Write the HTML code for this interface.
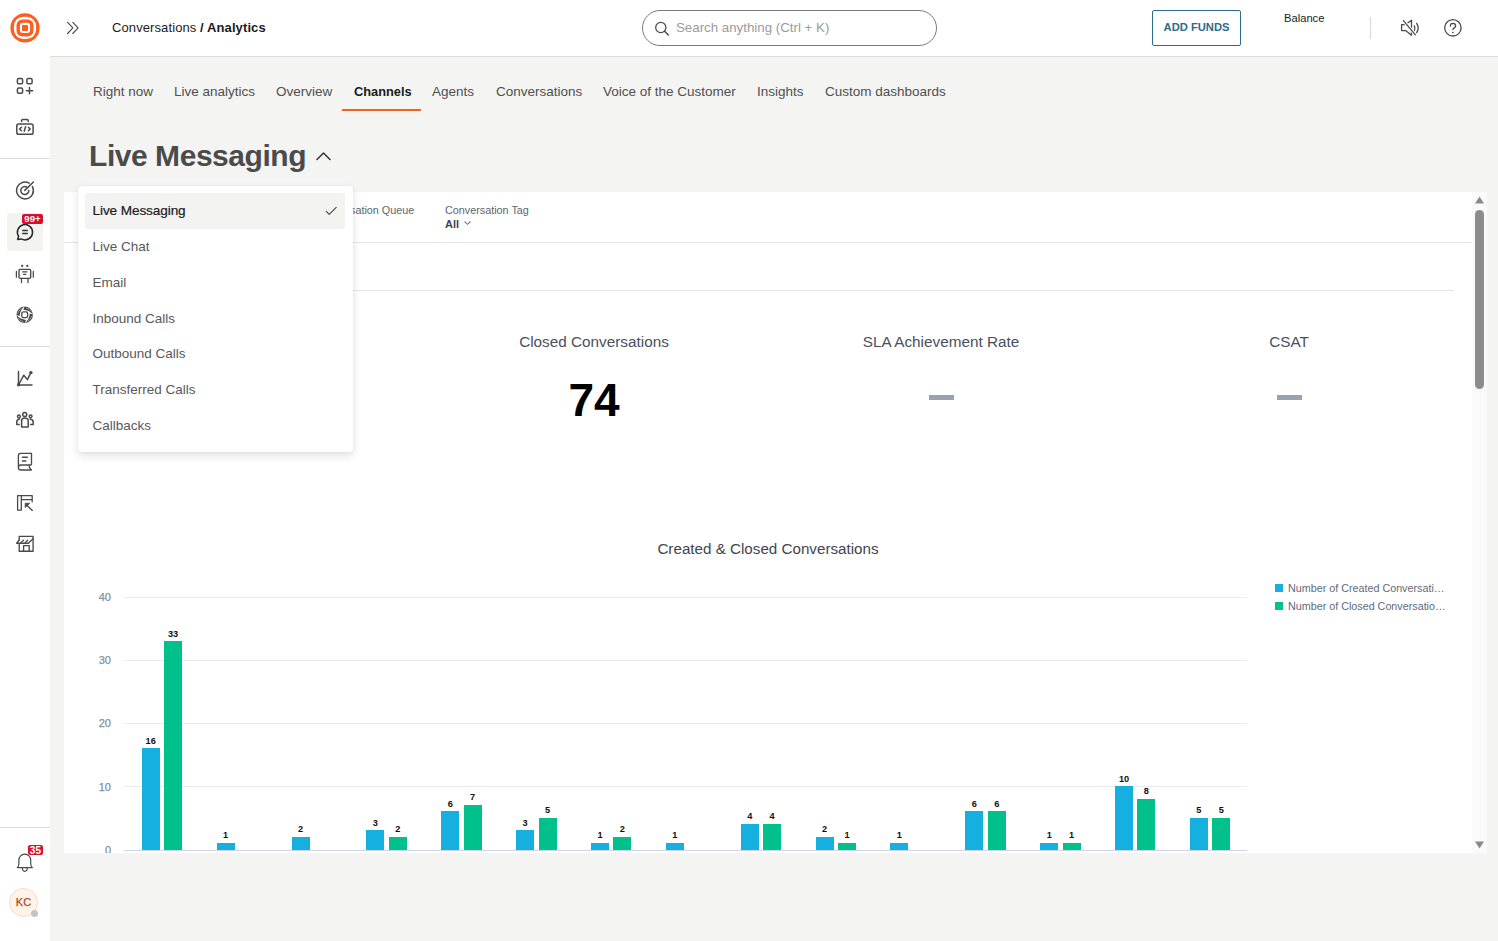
<!DOCTYPE html>
<html><head><meta charset="utf-8">
<style>
*{box-sizing:border-box;margin:0;padding:0}
html,body{width:1498px;height:941px;overflow:hidden;background:#f4f4f3;font-family:"Liberation Sans",sans-serif;position:relative}
.abs{position:absolute}
#side{left:0;top:0;width:50px;height:941px;background:#fff}
#head{left:50px;top:0;width:1448px;height:57px;background:#fff;border-bottom:1px solid #dcdcdc}
.hdiv{position:absolute;left:0;width:50px;height:1px;background:#dcdcdc}
.ic{position:absolute}
.ic svg{display:block}
.tab{position:absolute;top:84px;font-size:13.5px;color:#4f4f4f;white-space:nowrap}
.dd{position:absolute;left:92.5px;font-size:13.5px;color:#595959;white-space:nowrap}
#card{left:64px;top:192px;width:1423px;height:661px;background:#fff}
.hl{position:absolute;height:1px;background:#e1e6ec}
.kt{position:absolute;font-size:15.3px;color:#48515c;white-space:nowrap;text-align:center}
.dash{position:absolute;width:25px;height:5px;background:#97a3b0}
.yl{position:absolute;font-size:11px;color:#7f8d9d;-webkit-text-stroke:0.25px #8795a5;text-align:right;width:30px;left:81px}
.grid{position:absolute;left:124px;width:1123px;height:1px;background:#e9ecef}
.bar{position:absolute;width:18px}
.b{background:#15b0e0}
.g{background:#00c08c}
.bl{position:absolute;font-size:9.2px;font-weight:bold;color:#111;width:30px;text-align:center}
</style></head>
<body>
<!-- sidebar -->
<div id="side" class="abs">
  <!-- logo -->
  <svg class="ic" style="left:0;top:0" width="50" height="56" viewBox="0 0 50 56">
    <circle cx="25" cy="27.9" r="14.6" fill="#fc5f1d"/>
    <rect x="13.9" y="16.8" width="22.2" height="22.2" rx="9.5" fill="#fff"/>
    <rect x="16.5" y="19.4" width="17" height="17" rx="6" fill="#fc5f1d"/>
    <rect x="19.9" y="22.8" width="10.2" height="10.2" rx="3" fill="#fff"/>
    <rect x="22" y="24.9" width="6" height="6" rx="0.9" fill="#fc5f1d"/>
  </svg>

  <!-- grid -->
  <svg class="ic" style="left:0;top:70px" width="50" height="32" viewBox="0 70 50 32">
    <rect x="17.4" y="78.6" width="5.2" height="5.2" rx="1.3" fill="none" stroke="#4a4a4a" stroke-width="1.5" stroke-linecap="round" stroke-linejoin="round"/>
    <rect x="26.9" y="78.6" width="5.2" height="5.2" rx="1.3" fill="none" stroke="#4a4a4a" stroke-width="1.5" stroke-linecap="round" stroke-linejoin="round"/>
    <rect x="17.4" y="88.1" width="5.2" height="5.2" rx="1.3" fill="none" stroke="#4a4a4a" stroke-width="1.5" stroke-linecap="round" stroke-linejoin="round"/>
    <path d="M29.5 87.6 V93.8 M26.4 90.7 H32.6" fill="none" stroke="#4a4a4a" stroke-width="1.5" stroke-linecap="round" stroke-linejoin="round"/>
  </svg>
  <!-- code case -->
  <svg class="ic" style="left:0;top:112px" width="50" height="30" viewBox="0 112 50 30">
    <rect x="16.8" y="124" width="16.3" height="10.2" rx="1.8" fill="none" stroke="#4a4a4a" stroke-width="1.5" stroke-linecap="round" stroke-linejoin="round"/>
    <path d="M21.6 121.4 V120.6 Q21.6 119.4 22.8 119.4 H27 Q28.2 119.4 28.2 120.6 V121.4" fill="none" stroke="#4a4a4a" stroke-width="1.5" stroke-linecap="round" stroke-linejoin="round"/>
    <path d="M21.4 127.2 L19.6 129 L21.4 130.8 M28.4 127.2 L30.2 129 L28.4 130.8 M25.6 126.8 L24.2 131.2" fill="none" stroke="#4a4a4a" stroke-width="1.5" stroke-linecap="round" stroke-linejoin="round" stroke-width="1.4"/>
  </svg>
  <!-- target -->
  <svg class="ic" style="left:0;top:176px" width="50" height="30" viewBox="0 176 50 30">
    <path d="M32.4 186.5 A8.4 8.4 0 1 1 29.2 183.2" fill="none" stroke="#4a4a4a" stroke-width="1.5" stroke-linecap="round" stroke-linejoin="round"/>
    <path d="M28.8 190.6 A4 4 0 1 1 26.6 187" fill="none" stroke="#4a4a4a" stroke-width="1.5" stroke-linecap="round" stroke-linejoin="round"/>
    <path d="M24.8 190.4 L33.4 182" fill="none" stroke="#4a4a4a" stroke-width="1.5" stroke-linecap="round" stroke-linejoin="round"/>
  </svg>
  <!-- chat active -->
  <div class="abs" style="left:7px;top:213px;width:36px;height:38px;background:#f3f3f2;border-radius:3px"></div>
  <svg class="ic" style="left:0;top:220px" width="50" height="25" viewBox="0 220 50 25">
    <path d="M18.6 236.4 A7.6 7.6 0 1 1 21.3 238.9 L17.6 239.5 Z" fill="none" stroke="#2a2a2a" stroke-width="1.5" stroke-linejoin="round"/>
    <path d="M22.2 230.6 H27.8 M22.2 233.4 H27.8" stroke="#333" stroke-width="1.5"/>
  </svg>
  <div class="abs" style="left:22px;top:214px;width:21px;height:10px;background:#d5102c;border-radius:2px;color:#fff;font-size:9.6px;font-weight:bold;line-height:10.5px;text-align:center;letter-spacing:0.1px">99+</div>
  <!-- robot -->
  <svg class="ic" style="left:0;top:260px" width="50" height="28" viewBox="0 260 50 28">
    <rect x="19" y="269.3" width="11.7" height="9" rx="1.1" fill="none" stroke="#4a4a4a" stroke-linecap="round" stroke-linejoin="round" stroke-width="1.35"/>
    <circle cx="22.1" cy="265.9" r="1.15" fill="#4a4a4a"/>
    <circle cx="27.3" cy="265.9" r="1.15" fill="#4a4a4a"/>
    <path d="M16.4 271.4 V277.2 M33.3 271.4 V277.2 M21.5 279 V282.6 M28 279 V282.6" fill="none" stroke="#4a4a4a" stroke-linecap="round" stroke-linejoin="round" stroke-width="1.25"/>
    <path d="M22.6 271.8 H27 M23.6 274.4 H25.8" fill="none" stroke="#4a4a4a" stroke-linecap="round" stroke-linejoin="round" stroke-width="1.2"/>
  </svg>
  <!-- ai swirl -->
  <svg class="ic" style="left:0;top:302px" width="50" height="26" viewBox="0 302 50 26">
    <rect x="21.8" y="311.8" width="5.8" height="5.8" rx="1.7" fill="none" stroke="#4a4a4a" stroke-width="1.35"/>
    <path d="M24.41 306.60 A8.2 8.2 0 0 1 32.88 314.23 Q28.92 310.12 23.42 309.66 Z M32.90 314.51 A8.2 8.2 0 0 1 25.27 322.98 Q29.38 319.02 29.84 313.52 Z M24.99 323.00 A8.2 8.2 0 0 1 16.52 315.37 Q20.48 319.48 25.98 319.94 Z M16.50 315.09 A8.2 8.2 0 0 1 24.13 306.62 Q20.02 310.58 19.56 316.08 Z" fill="#4a4a4a"/><path d="M25.95 307.71 Q29.38 308.81 31.32 311.71 M31.79 316.05 Q30.69 319.48 27.79 321.42 M23.45 321.89 Q20.02 320.79 18.08 317.89 M17.61 313.55 Q18.71 310.12 21.61 308.18" fill="none" stroke="#fff" stroke-width="0.55" opacity="0.8"/>
  </svg>
  <!-- chart -->
  <svg class="ic" style="left:0;top:366px" width="50" height="26" viewBox="0 366 50 26">
    <path d="M18.5 371.6 V385 H32" fill="none" stroke="#4a4a4a" stroke-width="1.5" stroke-linecap="round" stroke-linejoin="round"/>
    <path d="M18.5 385 L23.8 375.2 L27.4 379.6 L30.8 372.8" fill="none" stroke="#4a4a4a" stroke-width="1.5" stroke-linecap="round" stroke-linejoin="round"/>
    <circle cx="30.9" cy="372.6" r="1.7" fill="#4a4a4a"/>
    <circle cx="18.6" cy="384.8" r="1.7" fill="#4a4a4a"/>
  </svg>
  <!-- people -->
  <svg class="ic" style="left:0;top:408px" width="50" height="24" viewBox="0 408 50 24">
    <circle cx="24.7" cy="414.6" r="2" fill="none" stroke="#4a4a4a" stroke-width="1.5" stroke-linecap="round" stroke-linejoin="round" stroke-width="1.3"/>
    <path d="M21.6 427 V421 Q21.6 418 24.8 418 Q28.2 418 28.2 421 V427 Z" fill="none" stroke="#4a4a4a" stroke-width="1.5" stroke-linecap="round" stroke-linejoin="round" stroke-width="1.4"/>
    <circle cx="18.9" cy="416.5" r="1.4" fill="none" stroke="#4a4a4a" stroke-width="1.5" stroke-linecap="round" stroke-linejoin="round" stroke-width="1.2"/>
    <circle cx="30.6" cy="416.3" r="1.4" fill="none" stroke="#4a4a4a" stroke-width="1.5" stroke-linecap="round" stroke-linejoin="round" stroke-width="1.2"/>
    <path d="M19.6 419 Q16.8 419.4 16.8 422 V424.4 H19.2 M30 419 Q33.2 419.4 33.2 422 V424.4 H30.6" fill="none" stroke="#4a4a4a" stroke-width="1.5" stroke-linecap="round" stroke-linejoin="round" stroke-width="1.3"/>
  </svg>
  <!-- book -->
  <svg class="ic" style="left:0;top:448px" width="50" height="28" viewBox="0 448 50 28">
    <path d="M18.4 467 V455.6 Q18.4 453.4 20.6 453.4 H31.5 V464.2 Q31.5 465 30.7 465 H21 Q18.4 465 18.4 467.4 Q18.4 470 21 470 H31.4 L29.4 467.6 V465" fill="none" stroke="#4a4a4a" stroke-linecap="round" stroke-linejoin="round" stroke-width="1.35"/>
    <path d="M22.4 457.3 H27.4 M22.4 461 H25.8" fill="none" stroke="#4a4a4a" stroke-linecap="round" stroke-linejoin="round" stroke-width="1.4"/>
  </svg>
  <!-- layout -->
  <svg class="ic" style="left:0;top:490px" width="50" height="26" viewBox="0 490 50 26">
    <path d="M17.6 495.7 H32.2 V501.8 M17.6 495.7 V510.2 H21.3 V495.7 M21.3 499.6 H32.2" fill="none" stroke="#4a4a4a" stroke-linecap="round" stroke-linejoin="round" stroke-width="1.3"/>
    <path d="M25.2 503.3 H29.8 L25.2 507.6 Z" fill="#4a4a4a" stroke="#4a4a4a" stroke-width="0.8" stroke-linejoin="round"/>
    <path d="M26.6 505 L32.3 510.4" fill="none" stroke="#4a4a4a" stroke-linecap="round" stroke-linejoin="round" stroke-width="1.35"/>
  </svg>
  <!-- store -->
  <svg class="ic" style="left:0;top:530px" width="50" height="26" viewBox="0 530 50 26">
    <path d="M19.2 540 V536.4 H33.1 V551.2 H19.2 V543.3" fill="none" stroke="#4a4a4a" stroke-linecap="round" stroke-linejoin="round" stroke-width="1.35"/>
    <path d="M19.2 540 L16.6 543.2 H28.4 L33 538.8" fill="none" stroke="#4a4a4a" stroke-linecap="round" stroke-linejoin="round" stroke-width="1.35"/>
    <path d="M21 542.6 L23.6 540.2 M25.2 542.6 L27.7 540.2" fill="none" stroke="#4a4a4a" stroke-linecap="round" stroke-linejoin="round" stroke-width="1.3"/>
    <path d="M23.6 551.2 V545.6 H29.2 V551.2" fill="none" stroke="#4a4a4a" stroke-linecap="round" stroke-linejoin="round" stroke-width="1.35"/>
  </svg>
  <!-- bell -->
  <svg class="ic" style="left:0;top:844px" width="50" height="32" viewBox="0 844 50 32">
    <path d="M17.3 867.6 Q18.9 866.6 18.9 863.6 V860 A5.9 5.9 0 0 1 30.7 860 V863.6 Q30.7 866.6 32.3 867.6 Z" fill="none" stroke="#4a4a4a" stroke-linecap="round" stroke-linejoin="round" stroke-width="1.2"/>
    <path d="M22.3 867.8 Q22.3 871.3 24.8 871.3 Q27.3 871.3 27.3 867.8" fill="none" stroke="#4a4a4a" stroke-linecap="round" stroke-linejoin="round" stroke-width="1.2"/>
  </svg>
  <div class="abs" style="left:28px;top:845px;width:15px;height:10px;background:#d5102c;border-radius:2px;color:#fff;font-size:10px;font-weight:bold;line-height:11px;text-align:center;letter-spacing:0.2px;white-space:nowrap">35</div>
  <!-- avatar -->
  <div class="abs" style="left:9px;top:888px;width:29px;height:29px;border-radius:50%;background:#fff3ea;border:1px solid #fbd9c0;color:#a8481c;font-size:11px;font-weight:normal;line-height:26px;text-align:center;-webkit-text-stroke:0.25px #a8481c">KC</div>
  <div class="abs" style="left:31px;top:910px;width:7px;height:7px;border-radius:50%;background:#c4c4c4"></div>
  <div class="hdiv" style="top:158px"></div>
  <div class="hdiv" style="top:346px"></div>
  <div class="hdiv" style="top:827px"></div>
</div>

<div id="head" class="abs">
</div>
<!-- double chevron -->
<svg class="ic" style="left:64.8px;top:20px" width="16" height="16" viewBox="0 0 16 16">
  <path d="M2.6 2.3 L7.9 7.9 L2.6 13.5 M7.8 2.3 L13.1 7.9 L7.8 13.5" fill="none" stroke="#4a4a4a" stroke-width="1.15" stroke-linecap="round" stroke-linejoin="round"/>
</svg>
<div class="abs" style="left:112px;top:20px;font-size:13px;color:#1c1c1c;white-space:nowrap;letter-spacing:0.1px">Conversations <b>/ Analytics</b></div>
<!-- search -->
<div class="abs" style="left:642px;top:10px;width:295px;height:36px;border:1px solid #7a7a7a;border-radius:18px;background:#fff"></div>
<svg class="ic" style="left:654px;top:21px" width="16" height="15" viewBox="0 0 16 15">
  <circle cx="6.8" cy="6.5" r="5.1" fill="none" stroke="#4a4a4a" stroke-width="1.25"/>
  <path d="M10.6 10.3 L14.3 14" stroke="#444" stroke-width="1.4" stroke-linecap="round"/>
</svg>
<div class="abs" style="left:676px;top:19.8px;font-size:13.3px;color:#9b9b9b;white-space:nowrap">Search anything (Ctrl + K)</div>
<!-- add funds -->
<div class="abs" style="left:1152px;top:10px;width:89px;height:36px;border:1.5px solid #2c6b8c;border-radius:2px;background:#fff"></div>
<div class="abs" style="left:1152px;top:21px;width:89px;text-align:center;font-size:11.2px;font-weight:bold;color:#2c6b8c;white-space:nowrap">ADD FUNDS</div>
<div class="abs" style="left:1284px;top:12px;font-size:11.2px;color:#222;white-space:nowrap">Balance</div>
<div class="abs" style="left:1370px;top:17px;width:1px;height:22px;background:#d6d6d6"></div>
<!-- mute icon -->
<svg class="ic" style="left:1395px;top:12px" width="30" height="30" viewBox="1395 12 30 30">
  <path d="M1405.6 24.6 H1401.6 V30.6 H1405.6 L1411.5 35.2 V20.2 Z" fill="none" stroke="#4a4a4a" stroke-linecap="round" stroke-linejoin="round" stroke-width="1.3"/>
  <path d="M1414.3 25.8 Q1415.6 28.2 1414.3 30.8 M1416.6 23.4 Q1419.8 28.2 1416.6 32.6" fill="none" stroke="#4a4a4a" stroke-linecap="round" stroke-linejoin="round" stroke-width="1.3"/>
  <path d="M1403.4 20.6 L1415.4 34.8" stroke="#fff" stroke-width="3.2" stroke-linecap="round"/>
  <path d="M1403.4 20.6 L1415.4 34.8" fill="none" stroke="#4a4a4a" stroke-linecap="round" stroke-linejoin="round" stroke-width="1.3"/>
</svg>
<!-- help -->
<svg class="ic" style="left:1440px;top:15px" width="26" height="26" viewBox="1440 15 26 26">
  <circle cx="1452.9" cy="27.8" r="8.2" fill="none" stroke="#4a4a4a" stroke-linecap="round" stroke-linejoin="round" stroke-width="1.3"/>
  <path d="M1450.4 26 Q1450.2 23.4 1452.9 23.3 Q1455.6 23.4 1455.6 25.7 Q1455.6 27.2 1453.9 28.1 Q1452.9 28.7 1452.9 29.6" fill="none" stroke="#4a4a4a" stroke-linecap="round" stroke-linejoin="round" stroke-width="1.3"/>
  <circle cx="1452.9" cy="32.5" r="0.85" fill="#4a4a4a"/>
</svg>

<div class="tab" style="left:93px">Right now</div>
<div class="tab" style="left:174px">Live analytics</div>
<div class="tab" style="left:276px">Overview</div>
<div class="tab" style="left:354px;color:#1a1a1a;font-weight:bold;font-size:12.8px">Channels</div>
<div class="tab" style="left:432px">Agents</div>
<div class="tab" style="left:496px">Conversations</div>
<div class="tab" style="left:603px">Voice of the Customer</div>
<div class="tab" style="left:757px">Insights</div>
<div class="tab" style="left:825px">Custom dashboards</div>
<div class="abs" style="left:342px;top:109px;width:79px;height:2px;background:#f26322"></div>
<div class="abs" style="left:89px;top:138.5px;font-size:30px;font-weight:bold;color:#4b4b4b;white-space:nowrap;letter-spacing:-0.45px">Live Messaging</div>
<svg class="ic" style="left:314px;top:149px" width="20" height="14" viewBox="0 0 20 14"><path d="M3 10.5 L9.5 4 L16 10.5" fill="none" stroke="#3a3a3a" stroke-width="1.6" stroke-linecap="round" stroke-linejoin="round"/></svg>
<div id="card" class="abs"></div>
<div class="hl" style="left:64px;top:242px;width:1408px"></div>
<div class="hl" style="left:82px;top:290px;width:1372px"></div>
<div class="abs" style="left:315.2px;top:204px;font-size:10.8px;color:#5b6570;white-space:nowrap">Conversation Queue</div>
<div class="abs" style="left:445px;top:204px;font-size:10.8px;color:#5b6570;white-space:nowrap">Conversation Tag</div>
<div class="abs" style="left:445px;top:218px;font-size:11px;font-weight:bold;color:#3d4650;white-space:nowrap">All</div>
<svg class="ic" style="left:463px;top:220px" width="9" height="6" viewBox="0 0 9 6"><path d="M1.5 1.5 L4.5 4.3 L7.5 1.5" fill="none" stroke="#77818c" stroke-width="1.1"/></svg>
<div class="abs" style="left:1472px;top:192px;width:15px;height:661px;background:#fafafa"></div>
<svg class="ic" style="left:1472px;top:192px" width="15" height="15" viewBox="0 0 15 15"><path d="M3 11.5 L7.5 4.5 L12 11.5 Z" fill="#8a8a8a"/></svg>
<svg class="ic" style="left:1472px;top:838px" width="15" height="15" viewBox="0 0 15 15"><path d="M3 3.5 L7.5 10.5 L12 3.5 Z" fill="#8a8a8a"/></svg>
<div class="abs" style="left:1475px;top:210px;width:9px;height:179px;background:#8c8c8c;border-radius:4.5px"></div>
<div class="kt" style="left:96.5px;top:333px;width:300px">Created Conversations</div>
<div class="kt" style="left:444px;top:333px;width:300px">Closed Conversations</div>
<div class="kt" style="left:791px;top:333px;width:300px">SLA Achievement Rate</div>
<div class="kt" style="left:1139px;top:333px;width:300px">CSAT</div>
<div class="abs" style="left:444px;top:373px;width:300px;text-align:center;font-size:46px;font-weight:bold;color:#000">74</div>
<div class="dash" style="left:929px;top:395px"></div>
<div class="dash" style="left:1277px;top:395px"></div>
<div class="abs" style="left:568px;top:540px;width:400px;text-align:center;font-size:15.2px;color:#3f4650;white-space:nowrap">Created &amp; Closed Conversations</div>
<div class="grid" style="top:597px"></div>
<div class="grid" style="top:660px"></div>
<div class="grid" style="top:723px"></div>
<div class="grid" style="top:786px"></div>
<div class="grid" style="top:850px;background:#ccd6eb"></div>
<div class="yl" style="top:591px">40</div>
<div class="yl" style="top:654px">30</div>
<div class="yl" style="top:717px">20</div>
<div class="yl" style="top:781px">10</div>
<div class="yl" style="top:844px;height:9px;overflow:hidden">0</div>
<div class="bar b" style="left:141.7px;top:748.3px;height:101.7px"></div>
<div class="bl" style="left:135.7px;top:735.7px">16</div>
<div class="bar g" style="left:164.1px;top:641.3px;height:208.7px"></div>
<div class="bl" style="left:158.1px;top:628.7px">33</div>
<div class="bar b" style="left:216.6px;top:842.8px;height:7.2px"></div>
<div class="bl" style="left:210.6px;top:830.2px">1</div>
<div class="bar b" style="left:291.5px;top:836.5px;height:13.5px"></div>
<div class="bl" style="left:285.5px;top:823.9px">2</div>
<div class="bar b" style="left:366.3px;top:830.2px;height:19.8px"></div>
<div class="bl" style="left:360.3px;top:817.6px">3</div>
<div class="bar g" style="left:388.7px;top:836.5px;height:13.5px"></div>
<div class="bl" style="left:382.7px;top:823.9px">2</div>
<div class="bar b" style="left:441.2px;top:811.3px;height:38.7px"></div>
<div class="bl" style="left:435.2px;top:798.7px">6</div>
<div class="bar g" style="left:463.6px;top:805.0px;height:45.0px"></div>
<div class="bl" style="left:457.6px;top:792.4px">7</div>
<div class="bar b" style="left:516.1px;top:830.2px;height:19.8px"></div>
<div class="bl" style="left:510.1px;top:817.6px">3</div>
<div class="bar g" style="left:538.5px;top:817.6px;height:32.4px"></div>
<div class="bl" style="left:532.5px;top:805.0px">5</div>
<div class="bar b" style="left:591.0px;top:842.8px;height:7.2px"></div>
<div class="bl" style="left:585.0px;top:830.2px">1</div>
<div class="bar g" style="left:613.4px;top:836.5px;height:13.5px"></div>
<div class="bl" style="left:607.4px;top:823.9px">2</div>
<div class="bar b" style="left:665.8px;top:842.8px;height:7.2px"></div>
<div class="bl" style="left:659.8px;top:830.2px">1</div>
<div class="bar b" style="left:740.7px;top:823.9px;height:26.1px"></div>
<div class="bl" style="left:734.7px;top:811.3px">4</div>
<div class="bar g" style="left:763.1px;top:823.9px;height:26.1px"></div>
<div class="bl" style="left:757.1px;top:811.3px">4</div>
<div class="bar b" style="left:815.6px;top:836.5px;height:13.5px"></div>
<div class="bl" style="left:809.6px;top:823.9px">2</div>
<div class="bar g" style="left:838.0px;top:842.8px;height:7.2px"></div>
<div class="bl" style="left:832.0px;top:830.2px">1</div>
<div class="bar b" style="left:890.4px;top:842.8px;height:7.2px"></div>
<div class="bl" style="left:884.4px;top:830.2px">1</div>
<div class="bar b" style="left:965.3px;top:811.3px;height:38.7px"></div>
<div class="bl" style="left:959.3px;top:798.7px">6</div>
<div class="bar g" style="left:987.7px;top:811.3px;height:38.7px"></div>
<div class="bl" style="left:981.7px;top:798.7px">6</div>
<div class="bar b" style="left:1040.2px;top:842.8px;height:7.2px"></div>
<div class="bl" style="left:1034.2px;top:830.2px">1</div>
<div class="bar g" style="left:1062.6px;top:842.8px;height:7.2px"></div>
<div class="bl" style="left:1056.6px;top:830.2px">1</div>
<div class="bar b" style="left:1115.0px;top:786.1px;height:63.9px"></div>
<div class="bl" style="left:1109.0px;top:773.5px">10</div>
<div class="bar g" style="left:1137.4px;top:798.7px;height:51.3px"></div>
<div class="bl" style="left:1131.4px;top:786.1px">8</div>
<div class="bar b" style="left:1189.9px;top:817.6px;height:32.4px"></div>
<div class="bl" style="left:1183.9px;top:805.0px">5</div>
<div class="bar g" style="left:1212.3px;top:817.6px;height:32.4px"></div>
<div class="bl" style="left:1206.3px;top:805.0px">5</div>
<div class="abs" style="left:1275px;top:584px;width:8px;height:8px;background:#15b0e0"></div>
<div class="abs" style="left:1275px;top:602px;width:8px;height:8px;background:#00c08c"></div>
<div class="abs" style="left:1288px;top:582px;font-size:10.75px;color:#5f6b78;white-space:nowrap">Number of Created Conversati…</div>
<div class="abs" style="left:1288px;top:600px;font-size:10.75px;color:#5f6b78;white-space:nowrap">Number of Closed Conversatio…</div>

<div class="abs" style="left:78px;top:186px;width:275px;height:266px;background:#fff;border-radius:4px;box-shadow:0 4px 10px rgba(0,0,0,0.12),0 0 2px rgba(0,0,0,0.07)"></div>
<div class="abs" style="left:85px;top:193px;width:260px;height:36px;background:#f3f3f2;border-radius:3px"></div>
<div class="dd" style="top:202.5px;color:#1b1b1b;font-size:13.6px;letter-spacing:-0.1px;-webkit-text-stroke:0.2px #1b1b1b">Live Messaging</div>
<div class="dd" style="top:238.8px">Live Chat</div>
<div class="dd" style="top:274.7px">Email</div>
<div class="dd" style="top:310.6px">Inbound Calls</div>
<div class="dd" style="top:346.4px">Outbound Calls</div>
<div class="dd" style="top:382.2px">Transferred Calls</div>
<div class="dd" style="top:418.1px">Callbacks</div>
<svg class="ic" style="left:324px;top:205px" width="14" height="12" viewBox="0 0 14 12"><path d="M2.2 6.4 L5.2 9.4 L12.2 2.4" fill="none" stroke="#444" stroke-width="1.1" stroke-linecap="round" stroke-linejoin="round"/></svg>

</body></html>
